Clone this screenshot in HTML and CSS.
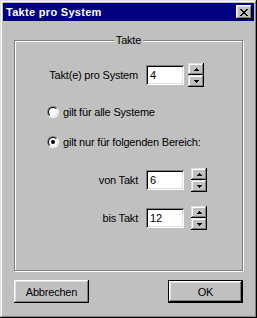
FILE: index.html
```html
<!DOCTYPE html>
<html>
<head>
<meta charset="utf-8">
<link rel="stylesheet" href="styles.css">
</head>
<body>
<div class="window">
  <div class="titlebar">
    <span class="title">Takte pro System</span>
    <div class="close">
      <svg width="8" height="7" viewBox="0 0 8 7" shape-rendering="crispEdges">
        <g fill="#000">
          <rect x="0" y="0" width="2" height="1"/><rect x="6" y="0" width="2" height="1"/>
          <rect x="1" y="1" width="2" height="1"/><rect x="5" y="1" width="2" height="1"/>
          <rect x="2" y="2" width="4" height="1"/>
          <rect x="3" y="3" width="2" height="1"/>
          <rect x="2" y="4" width="4" height="1"/>
          <rect x="1" y="5" width="2" height="1"/><rect x="5" y="5" width="2" height="1"/>
          <rect x="0" y="6" width="2" height="1"/><rect x="6" y="6" width="2" height="1"/>
        </g>
      </svg>
    </div>
  </div>
  <div class="client">
    <div class="group">
      <span class="legend">Takte</span>
      <div class="num-row row-first">
        <span class="lbl"><span>Takt(e) pro System</span></span>
        <div class="field">4</div>
        <div class="spin">
          <div class="sbtn"><svg width="5" height="3" viewBox="0 0 5 3" shape-rendering="crispEdges"><path d="M2 0h1v1h1v1h1v1H0V2h1V1h1z"/></svg></div>
          <div class="sbtn"><svg width="5" height="3" viewBox="0 0 5 3" shape-rendering="crispEdges"><path d="M0 0h5v1H4v1H3v1H2V2H1V1H0z"/></svg></div>
        </div>
      </div>
      <div class="radio-row radio-first"><span class="radio"></span><span>gilt für alle Systeme</span></div>
      <div class="radio-row radio-second"><span class="radio checked"></span><span>gilt nur für folgenden Bereich:</span></div>
      <div class="num-row row-von">
        <span class="lbl"><span>von Takt</span></span>
        <div class="field">6</div>
        <div class="spin spin-shift">
          <div class="sbtn"><svg width="5" height="3" viewBox="0 0 5 3" shape-rendering="crispEdges"><path d="M2 0h1v1h1v1h1v1H0V2h1V1h1z"/></svg></div>
          <div class="sbtn"><svg width="5" height="3" viewBox="0 0 5 3" shape-rendering="crispEdges"><path d="M0 0h5v1H4v1H3v1H2V2H1V1H0z"/></svg></div>
        </div>
      </div>
      <div class="num-row row-bis">
        <span class="lbl"><span>bis Takt</span></span>
        <div class="field">12</div>
        <div class="spin spin-shift">
          <div class="sbtn"><svg width="5" height="3" viewBox="0 0 5 3" shape-rendering="crispEdges"><path d="M2 0h1v1h1v1h1v1H0V2h1V1h1z"/></svg></div>
          <div class="sbtn"><svg width="5" height="3" viewBox="0 0 5 3" shape-rendering="crispEdges"><path d="M0 0h5v1H4v1H3v1H2V2H1V1H0z"/></svg></div>
        </div>
      </div>
    </div>
    <div class="buttons">
      <div class="btn">Abbrechen</div>
      <div class="btn btn-default">OK</div>
    </div>
  </div>
</div>
</body>
</html>
```

FILE: styles.css
```css
html, body {
  margin: 0;
  padding: 0;
  background: #c0c0c0;
}
body {
  font-family: "Liberation Sans", Arial, sans-serif;
  font-size: 11px;
  letter-spacing: -0.2px;
  color: #000;
}
.window {
  width: 257px;
  height: 318px;
  box-sizing: border-box;
  padding: 3px;
  background: #c0c0c0;
  box-shadow: inset -1px -1px #000, inset 1px 1px #dfdfdf, inset -2px -2px #808080, inset 2px 2px #fff;
  display: flex;
  flex-direction: column;
}
.titlebar {
  height: 18px;
  background: #000080;
  display: flex;
  align-items: center;
  padding: 0 2px 0 3px;
}
.title {
  flex: 1;
  color: #fff;
  font-weight: bold;
  font-size: 11px;
  letter-spacing: 0.3px;
}
.close {
  width: 16px;
  height: 14px;
  box-sizing: border-box;
  background: #c0c0c0;
  box-shadow: inset -1px -1px #000, inset 1px 1px #fff, inset -2px -2px #808080, inset 2px 2px #dfdfdf;
  display: flex;
  justify-content: center;
  align-items: center;
  padding-right: 1px;
}
.close svg { display: block; }
.client {
  flex: 1;
  padding: 19px 0 0 11px;
  display: flex;
  flex-direction: column;
}
.group {
  position: relative;
  width: 229px;
  height: 231px;
  box-sizing: border-box;
  border: 1px solid #808080;
  box-shadow: inset 1px 1px #fff, 1px 1px 0 #fff;
  padding: 22px 0 0 32px;
  display: flex;
  flex-direction: column;
}
.legend {
  position: absolute;
  top: -8px;
  left: 50%;
  transform: translateX(-50%);
  background: #c0c0c0;
  padding: 0 2px;
  line-height: 14px;
}
.num-row {
  display: flex;
  align-items: center;
  height: 24px;
}
.lbl {
  width: 91px;
  flex: none;
  display: flex;
  justify-content: flex-end;
  white-space: nowrap;
  margin-right: 8px;
}
.field {
  width: 38px;
  height: 20px;
  flex: none;
  box-sizing: border-box;
  background: #fff;
  box-shadow: inset 1px 1px #808080, inset -1px -1px #fff, inset 2px 2px #000, inset -2px -2px #dfdfdf;
  padding: 0 0 0 4px;
  line-height: 20px;
}
.spin {
  margin-left: 4px;
  width: 16px;
  height: 24px;
  flex: none;
  display: flex;
  flex-direction: column;
}
.spin-shift { margin-left: 7px; }
.sbtn {
  flex: 1;
  background: #c0c0c0;
  box-shadow: inset -1px -1px #000, inset 1px 1px #dfdfdf, inset -2px -2px #808080, inset 2px 2px #fff;
  display: flex;
  align-items: center;
  justify-content: center;
}
.sbtn svg { display: block; fill: #000; }
.radio-row {
  display: flex;
  align-items: center;
  height: 12px;
  white-space: nowrap;
}
.radio-first { margin-top: 19px; }
.radio-second { margin-top: 18px; }
.row-von { margin-top: 20px; }
.row-bis { margin-top: 14px; }
.radio {
  position: relative;
  flex: none;
  width: 12px;
  height: 12px;
  box-sizing: border-box;
  border-radius: 50%;
  border: 1px solid;
  border-color: #808080 #fff #fff #808080;
  margin-right: 4px;
}
.radio::before {
  content: "";
  display: block;
  width: 10px;
  height: 10px;
  box-sizing: border-box;
  border-radius: 50%;
  border: 1px solid;
  border-color: #000 #dfdfdf #dfdfdf #000;
  background: #fff;
}
.checked::after {
  content: "";
  position: absolute;
  left: 3px;
  top: 3px;
  width: 4px;
  height: 4px;
  border-radius: 50%;
  background: #000;
}
.buttons {
  margin-top: 9px;
  width: 229px;
  display: flex;
  justify-content: space-between;
}
.btn {
  width: 75px;
  height: 23px;
  box-sizing: border-box;
  background: #c0c0c0;
  box-shadow: inset -1px -1px #000, inset 1px 1px #fff, inset -2px -2px #808080, inset 2px 2px #dfdfdf;
  display: flex;
  align-items: center;
  justify-content: center;
}
.btn-default {
  border: 1px solid #000;
}
```
